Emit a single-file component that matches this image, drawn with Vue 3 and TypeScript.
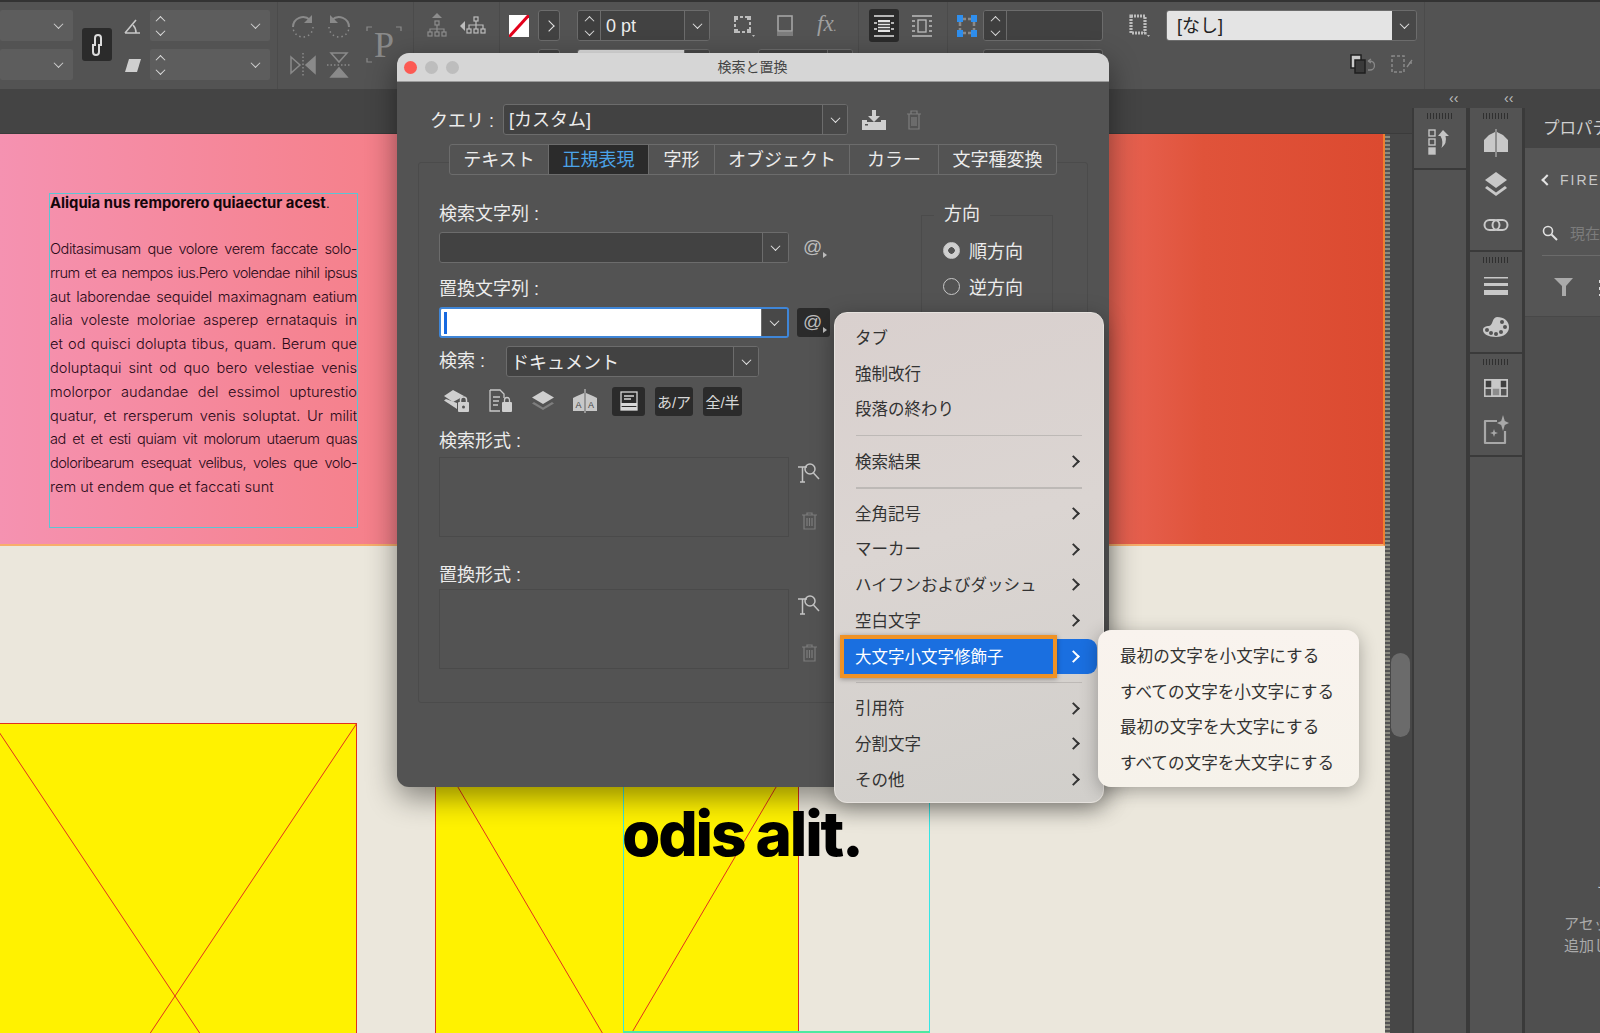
<script setup lang="ts">
const bodyLines: { t: string; s: number }[] = [
  { t: 'Oditasimusam que volore verem faccate solo-', s: -0.45 },
  { t: 'rrum et ea nempos ius.Pero volendae nihil ipsus', s: -0.6 },
  { t: 'aut laborendae sequidel maximagnam eatium', s: -0.2 },
  { t: 'alia voleste moloriae asperep ernataquis in', s: 0 },
  { t: 'et od quisci dolupta tibus, quam. Berum que', s: 0 },
  { t: 'doluptaqui sint od quo bero velestiae venis', s: 0 },
  { t: 'molorpor audandae del essimol upturestio', s: 0 },
  { t: 'quatur, et rersperum venis soluptat. Ur milit', s: 0 },
  { t: 'ad et et esti quiam vit molorum utaerum quas', s: -0.45 },
  { t: 'doloribearum esequat velibus, voles que volo-', s: -0.55 },
]
type Row = { t?: string; arrow?: boolean; sep?: boolean; on?: boolean }
const rows: Row[] = [
  { t: 'タブ' },
  { t: '強制改行' },
  { t: '段落の終わり' },
  { sep: true },
  { t: '検索結果', arrow: true },
  { sep: true },
  { t: '全角記号', arrow: true },
  { t: 'マーカー', arrow: true },
  { t: 'ハイフンおよびダッシュ', arrow: true },
  { t: '空白文字', arrow: true },
  { t: '大文字小文字修飾子', arrow: true, on: true },
  { sep: true },
  { t: '引用符', arrow: true },
  { t: '分割文字', arrow: true },
  { t: 'その他', arrow: true },
]
const sub: string[] = ['最初の文字を小文字にする', 'すべての文字を小文字にする', '最初の文字を大文字にする', 'すべての文字を大文字にする']
const tabs: string[] = ['テキスト', '正規表現', '字形', 'オブジェクト', 'カラー', '文字種変換']
const tabWidths: number[] = [98, 100, 66, 135, 89, 118]
</script>

<template>
  <div class="app">
    <header class="toolbar">
      <div class="col c1">
        <div class="lsel"><i class="chev"></i></div>
        <div class="lsel"><i class="chev"></i></div>
      </div>
      <div class="col c2">
        <div class="chain">
          <svg width="14" height="26" viewBox="0 0 14 26" fill="none" stroke="#dcdcdc" stroke-width="2"><path d="M5 14V6a3 3 0 0 1 6 0v8"/><path d="M9 12v8a3 3 0 0 1-6 0v-8"/></svg>
        </div>
      </div>
      <div class="col c3">
        <div class="ic"><svg width="18" height="18" viewBox="0 0 18 18" fill="none" stroke="#c8c8c8" stroke-width="1.6"><path d="M1 16h15M1 16 12 3"/><path d="M9 8q3 3 3 8"/></svg></div>
        <div class="ic"><svg width="18" height="18" viewBox="0 0 18 18" fill="#cfcfcf"><path d="M5 3h12l-4 13H1z"/></svg></div>
      </div>
      <div class="col c4">
        <div class="lsel"><span class="stack"><i class="chev up"></i><i class="chev"></i></span><i class="chev"></i></div>
        <div class="lsel"><span class="stack"><i class="chev up"></i><i class="chev"></i></span><i class="chev"></i></div>
      </div>
      <div class="vsep s1"></div>
      <div class="col c5 two">
        <div class="ic"><svg width="28" height="28" viewBox="0 0 28 28" fill="none" stroke="#8a8a8a" stroke-width="2"><path d="M4 15A10 10 0 0 1 21 8"/><path d="M24 15a10 10 0 0 1-20 0" stroke-dasharray="1.5 3" stroke-width="1.5"/><path d="M23 3v8h-8z" fill="#8a8a8a" stroke="none"/></svg></div>
        <div class="ic"><svg width="28" height="28" viewBox="0 0 28 28" fill="none" stroke="#8a8a8a" stroke-width="2"><path d="M24 15A10 10 0 0 0 7 8"/><path d="M4 15a10 10 0 0 0 20 0" stroke-dasharray="1.5 3" stroke-width="1.5"/><path d="M5 3v8h8z" fill="#8a8a8a" stroke="none"/></svg></div>
        <div class="ic"><svg width="28" height="26" viewBox="0 0 28 26" fill="none" stroke="#8a8a8a" stroke-width="1.5"><path d="M2 5l9 8-9 8z"/><path d="M14 1v24" stroke-dasharray="1.5 2"/><path d="M26 5l-9 8 9 8z" fill="#8a8a8a"/></svg></div>
        <div class="ic"><svg width="26" height="28" viewBox="0 0 26 28" fill="none" stroke="#8a8a8a" stroke-width="1.5"><path d="M5 2h16l-8 9z"/><path d="M1 14h24" stroke-dasharray="1.5 2"/><path d="M5 26h16l-8-9z" fill="#8a8a8a"/></svg></div>
      </div>
      <div class="col c6">
        <svg class="pmark" width="36" height="38" viewBox="0 0 36 38" fill="none" stroke="#8a8a8a" stroke-width="1.2"><path d="M1 5V1h5M30 1h5v4M1 32v4h5"/><text x="8" y="31" font-size="36" font-family="Liberation Serif" fill="#8a8a8a" stroke="none">P</text></svg>
      </div>
      <div class="vsep s2"></div>
      <div class="col c7 two">
        <div class="ic"><svg width="20" height="26" viewBox="0 0 20 26" fill="none" stroke="#8d8d8d" stroke-width="1.2"><path d="M10 0l5 5H5z" fill="#8d8d8d" stroke="none"/><rect x="8" y="8" width="4" height="4"/><path d="M10 12v4M3 19v-3h14v3M10 16v3"/><rect x="1" y="19" width="4" height="4"/><rect x="8" y="19" width="4" height="4"/><rect x="15" y="19" width="4" height="4"/></svg></div>
        <div class="ic"><svg width="26" height="20" viewBox="0 0 26 20" fill="none" stroke="#bdbdbd" stroke-width="1.2"><path d="M0 10l5-5v10z" fill="#bdbdbd" stroke="none"/><rect x="14" y="1" width="4" height="4"/><path d="M16 5v4M9 13v-4h14v4M16 9v4"/><rect x="7" y="13" width="4" height="4"/><rect x="14" y="13" width="4" height="4"/><rect x="21" y="13" width="4" height="4"/></svg></div>
      </div>
      <div class="vsep s3"></div>
      <div class="col c8">
        <div class="strokerow">
          <svg width="20" height="22" viewBox="0 0 20 22"><rect width="20" height="22" fill="#fff"/><path d="M20 0 0 22" stroke="#e3001b" stroke-width="3"/></svg>
          <span class="nextbtn"><i class="chev right"></i></span>
        </div>
        <div class="strokerow end"><span class="nextbtn"></span></div>
      </div>
      <div class="col c9">
        <div class="dsel">
          <span class="stepper"><i class="chev up"></i><i class="chev"></i></span>
          <span class="val">0 pt</span>
          <span class="drop"><i class="chev"></i></span>
        </div>
        <div class="dsel lightfill"><span class="val"></span><span class="drop"><i class="chev"></i></span></div>
      </div>
      <div class="col c10">
        <div class="row3">
          <svg width="24" height="24" viewBox="0 0 24 24" fill="none" stroke="#bdbdbd" stroke-width="2"><rect x="3" y="3" width="15" height="15" stroke-dasharray="3 2"/><rect x="2" y="2" width="4" height="4" fill="#bdbdbd" stroke="none"/><rect x="15" y="2" width="4" height="4" fill="#bdbdbd" stroke="none"/><rect x="2" y="15" width="4" height="4" fill="#bdbdbd" stroke="none"/><rect x="15" y="15" width="4" height="4" fill="#bdbdbd" stroke="none"/><path d="M20 21h3l-1.500 2z" fill="#bdbdbd" stroke="none"/></svg>
          <svg width="20" height="24" viewBox="0 0 20 24" fill="none"><rect x="3" y="2" width="14" height="15" stroke="#a5a5a5" stroke-width="1.600"/><rect x="2" y="18" width="16" height="4" fill="#7e7e7e"/></svg>
          <span class="fx">fx<small>.</small></span>
        </div>
        <div class="dsel small"><span class="val"></span><span class="drop"></span></div>
      </div>
      <div class="vsep s4"></div>
      <div class="col c11">
        <div class="row2">
          <span class="darkbtn"><svg width="20" height="22" viewBox="0 0 20 22" fill="none" stroke="#e5e5e5" stroke-width="1.400"><path d="M0 1h20M0 21h20M0 8h3M17 8h3M0 14h3M17 14h3"/><rect x="4" y="5" width="12" height="12" fill="#e5e5e5" stroke="none"/><path d="M4 8h12M4 11h12M4 14h12" stroke="#2c2c2c"/></svg></span>
          <svg width="20" height="22" viewBox="0 0 20 22" fill="none" stroke="#bdbdbd" stroke-width="1.300"><path d="M0 1h20M0 21h20M0 6h3M17 6h3M0 11h3M17 11h3M0 16h3M17 16h3"/><rect x="6" y="5" width="8" height="12"/></svg>
        </div>
      </div>
      <div class="vsep s5"></div>
      <div class="col c12">
        <div class="row4">
          <svg width="22" height="24" viewBox="0 0 22 24" fill="none"><path d="M6 5h9M6 19h9M4 8v8M18 8v8" stroke="#8a8a8a" stroke-width="2.500" stroke-dasharray="4 2"/><g fill="#2f8fee"><rect x="1" y="1" width="6" height="7"/><rect x="15" y="1" width="6" height="7"/><rect x="1" y="16" width="6" height="7"/><rect x="15" y="16" width="6" height="7"/></g></svg>
          <div class="dsel grow"><span class="stepper"><i class="chev up"></i><i class="chev"></i></span><span class="val"></span></div>
        </div>
        <div class="dsel grow peek"></div>
      </div>
      <div class="col c13">
        <svg class="dots" width="22" height="24" viewBox="0 0 22 24" fill="none" stroke="#bdbdbd" stroke-width="3.200" stroke-dasharray="2 1"><rect x="2" y="2" width="14" height="17"/><path d="M18 21h3l-1.500 2z" fill="#bdbdbd" stroke="none"/></svg>
      </div>
      <div class="col c14">
        <div class="nashi"><span class="nval">[なし]</span><span class="drop"><i class="chev"></i></span></div>
        <div class="row5">
          <svg width="26" height="24" viewBox="0 0 26 24" fill="none"><rect x="2" y="2" width="10" height="13" fill="#c9c9c9" stroke="#1f1f1f" stroke-width="1.500"/><rect x="6" y="7" width="10" height="13" fill="#3a3a3a" stroke="#1f1f1f" stroke-width="1.500"/><path d="M19 8h2a4 4 0 0 1 0 9h-2M19 8l3-2M19 8l3 2" stroke="#888" stroke-width="1.300"/></svg>
          <svg width="26" height="24" viewBox="0 0 26 24" fill="none" stroke="#8a8a8a" stroke-width="1.500"><rect x="3" y="3" width="12" height="16" stroke-dasharray="3 2"/><path d="M18 14l5-7M20 10h3" stroke-width="1.300"/></svg>
        </div>
      </div>
      <div class="vsep s6"></div>
    </header>

    <main class="main">
      <section class="work">
        <div class="strip"></div>
        <div class="below">
          <div class="canvas">
            <div class="band"></div>
            <div class="pageedge"></div>
            <div class="frame copy">
              <p class="head"><b>Aliquia nus remporero quiaectur acest</b>.</p>
              <p v-for="l in bodyLines" :key="l.t" class="line" :style="{ letterSpacing: l.s + 'px' }">{{ l.t }}</p>
              <p class="line last">rem ut endem que et faccati sunt</p>
            </div>
            <svg class="ph p1" viewBox="0 0 364 546" preserveAspectRatio="none"><rect width="364" height="546" fill="#fff200"/><path d="M0 0 364 546M364 0 0 546" stroke="#e0311f" stroke-width="1"/><rect x=".5" y=".5" width="363" height="545" fill="none" stroke="#e0311f"/></svg>
            <svg class="ph p2" viewBox="0 0 364 620" preserveAspectRatio="none"><rect width="364" height="620" fill="#fff200"/><path d="M0 0 364 620M364 0 0 620" stroke="#e0311f" stroke-width="1"/><rect x=".5" y=".5" width="363" height="619" fill="none" stroke="#e0311f"/></svg>
            <div class="frame big"><span>odis alit.</span></div>
          </div>
          <div class="gutter"><div class="thumb"></div></div>
        </div>
      </section>

      <aside class="docks">
        <div class="collapse"><span class="cc a">‹‹</span><span class="cc b">‹‹</span></div>
        <div class="dockrow">
          <div class="dock">
            <div class="grp g0">
              <div class="grip"></div>
              <svg class="di" width="24" height="30" viewBox="0 0 24 30" fill="none" stroke="#c4c4c4" stroke-width="1.400"><rect x="1" y="3" width="6" height="6"/><rect x="1" y="12" width="6" height="6"/><rect x="1" y="21" width="6" height="6" fill="#c4c4c4"/><path d="M15 3l6 6h-3.500q2 7-4 12 2-7-1-12H10z" fill="#c4c4c4" stroke="none"/></svg>
            </div>
            <div class="grp rest"></div>
          </div>
          <div class="dock">
            <div class="grp g1">
              <div class="grip"></div>
              <svg class="di" width="26" height="28" viewBox="0 0 26 28" fill="#c8c8c8"><path d="M6 6l6-3v20H1v-12zM20 6l-6-3v20h11v-12z"/><path d="M13 0v28" stroke="#c8c8c8" stroke-width="1"/></svg>
              <svg class="di" width="24" height="26" viewBox="0 0 24 26" fill="#c8c8c8"><path d="M12 1l11 8-11 8L1 9z"/><path d="M3 15l-2 2 11 8 11-8-2-2-9 6.500z"/></svg>
              <svg class="di" width="26" height="14" viewBox="0 0 26 14" fill="none" stroke="#c8c8c8" stroke-width="2"><rect x="1.500" y="2" width="15" height="10" rx="5"/><rect x="9.500" y="2" width="15" height="10" rx="5"/></svg>
            </div>
            <div class="grp g2">
              <div class="grip"></div>
              <svg class="di" width="24" height="18" viewBox="0 0 24 18" fill="#c8c8c8"><rect width="24" height="1.500"/><rect y="6" width="24" height="3"/><rect y="13" width="24" height="5"/></svg>
              <svg class="di" width="28" height="22" viewBox="0 0 28 22"><path d="M15 1c7 0 12 4 12 10 0 6-5 10-13 10S1 18 1 14c0-3 3-4 6-4 4 0 3-9 8-9z" fill="#c8c8c8"/><g fill="#535353"><circle cx="20" cy="6" r="2"/><circle cx="23" cy="11" r="2"/><circle cx="19" cy="16" r="2"/><circle cx="14" cy="18" r="2"/><circle cx="9" cy="17" r="2"/><circle cx="5" cy="14" r="2"/></g></svg>
            </div>
            <div class="grp g3">
              <div class="grip"></div>
              <svg class="di" width="24" height="18" viewBox="0 0 24 18" fill="none" stroke="#c8c8c8" stroke-width="1.500"><rect x=".8" y=".8" width="22.400" height="16.400"/><path d="M.8 9h22.400M8 .8v16.400M16 .8v16.400"/><rect x="8" y="1" width="8" height="8" fill="#c8c8c8"/><rect x="1" y="1" width="7" height="8" fill="#3f3f3f"/><rect x="16" y="1" width="7" height="8" fill="#3f3f3f"/><rect x="8" y="9" width="8" height="8" fill="#8c8c8c"/></svg>
              <svg class="di" width="26" height="30" viewBox="0 0 26 30" fill="none"><path d="M14 6H2v22h20V16" stroke="#a8a8a8" stroke-width="2.200" stroke-linejoin="round"/><path d="M20 0l1.800 6L26 8l-4.200 2L20 16l-1.800-6L14 8l4.200-2zM11 14l1 3 3 1-3 1-1 3-1-3-3-1 3-1z" fill="#a8a8a8"/></svg>
            </div>
            <div class="grp rest"></div>
          </div>
          <div class="panel">
            <div class="ptab"><span>プロパティ</span></div>
            <div class="ptop">
              <div class="crumb"><i class="chev back"></i><span>FIREFLY</span></div>
              <div class="search">
                <svg width="16" height="16" viewBox="0 0 16 16" fill="none" stroke="#e0e0e0" stroke-width="1.600"><circle cx="6" cy="6" r="4.500"/><path d="M9.500 9.500 15 15" stroke-width="2"/></svg>
                <span>現在のドキュメント</span>
              </div>
              <div class="filters">
                <svg width="19" height="18" viewBox="0 0 19 18" fill="#aaa"><path d="M0 0h19l-7 8v10H8V8z"/></svg>
                <i class="kebab"></i>
              </div>
            </div>
            <div class="pmain">
              <p class="p-a">テキスト</p>
              <p class="p-b">アセットを</p>
              <p class="p-c">追加してください</p>
            </div>
          </div>
        </div>
      </aside>
    </main>

    <div class="dialog">
      <div class="title">
        <span class="lights"><i class="red"></i><i></i><i></i></span>
        <span class="ttext">検索と置換</span>
      </div>
      <div class="dbody">
        <div class="query">
          <span class="qlabel">クエリ :</span>
          <div class="dsel q"><span class="val">[カスタム]</span><span class="drop"><i class="chev"></i></span></div>
          <svg class="qi" width="24" height="20" viewBox="0 0 24 20" fill="#cfcfcf"><path d="M10 0h4v6h4l-6 6-6-6h4z"/><rect y="10" width="5" height="2"/><rect x="19" y="10" width="5" height="2"/><path d="M0 12h24v8H0z"/><rect x="3" y="14" width="3" height="1.500" fill="#535353"/></svg>
          <svg class="qt" width="16" height="20" viewBox="0 0 16 20" fill="none" stroke="#7d7d7d" stroke-width="1.200"><path d="M1 4h14M5 4V1h6v3M3 4v15h10V4M6 7v9M8 7v9M10 7v9"/></svg>
        </div>
        <div class="tabarea">
          <div class="tabs">
            <span v-for="(t, i) in tabs" :key="t" class="tab" :class="{ active: i === 1 }" :style="{ width: tabWidths[i] + 'px' }">{{ t }}</span>
          </div>
          <div class="tabpanel">
            <div class="left">
              <div class="flabel">検索文字列 :</div>
              <div class="frow">
                <div class="dsel fld"><span class="val"></span><span class="drop"><i class="chev"></i></span></div>
                <span class="at">@<i></i></span>
              </div>
              <div class="flabel gap">置換文字列 :</div>
              <div class="frow">
                <div class="dsel fld focus"><span class="val"><i class="caret"></i></span><span class="drop"><i class="chev"></i></span></div>
                <span class="at on">@<i></i></span>
              </div>
              <div class="srow">
                <span class="slabel">検索 :</span>
                <div class="dsel doc"><span class="val">ドキュメント</span><span class="drop"><i class="chev"></i></span></div>
              </div>
              <div class="irow">
                <span class="ib w1"><svg width="26" height="24" viewBox="0 0 26 24"><path d="M9 1l11 6-11 6L0 7z" fill="#cfcfcf"/><path d="M2 10l-2 1.500L13 20v-6z" fill="#cfcfcf"/><rect x="14" y="13" width="11" height="10" rx="1" fill="#cfcfcf"/><path d="M16.500 13v-2a3 3 0 0 1 6 0v2" fill="none" stroke="#cfcfcf" stroke-width="1.500"/><circle cx="19.500" cy="18" r="1.500" fill="#535353"/></svg></span>
                <span class="ib w2"><svg width="24" height="24" viewBox="0 0 24 24" fill="none" stroke="#c8c8c8" stroke-width="1.300"><path d="M1 1h10l4 4v4M11 22H1V1M4 8h7M4 12h6M4 16h5"/><rect x="13" y="13" width="10" height="10" rx="1" fill="#cfcfcf" stroke="none"/><path d="M15.500 13v-2a2.500 2.500 0 0 1 5 0v2"/></svg></span>
                <span class="ib w3"><svg width="24" height="22" viewBox="0 0 24 22"><path d="M12 1l11 6.500L12 14 1 7.500z" fill="#cfcfcf"/><path d="M3 12l-2 1.500L12 20l11-6.500-2-1.500-9 5.500z" fill="#7e7e7e"/></svg></span>
                <span class="ib w4"><svg width="26" height="24" viewBox="0 0 26 24"><path d="M5 7l7-3v18H1V9zM21 7l-7-3v18h11V9z" fill="#c8c8c8"/><path d="M13 0v24" stroke="#d8d8d8"/><text x="3.500" y="19" font-size="9" font-family="Liberation Sans" fill="#444">A</text><text x="16" y="19" font-size="9" font-family="Liberation Sans" fill="#444">A</text></svg></span>
                <span class="ibtn b1"><svg width="18" height="20" viewBox="0 0 18 20" fill="none" stroke="#d8d8d8" stroke-width="1.300"><rect x="1" y="1" width="16" height="18"/><path d="M4 5h10M4 8h7"/><rect x="1" y="12" width="16" height="3" fill="#d8d8d8" stroke="none"/><rect x="1" y="16" width="16" height="3" fill="#d8d8d8" stroke="none"/></svg></span>
                <span class="ibtn b2">あ/ア</span>
                <span class="ibtn b3">全/半</span>
              </div>
              <div class="flabel g2">検索形式 :</div>
              <div class="frow fm">
                <div class="fbox"></div>
                <div class="fic">
                  <svg width="24" height="22" viewBox="0 0 24 22" fill="none" stroke="#c4c4c4" stroke-width="1.500"><path d="M1 5h9M5.500 5v15M3 20h5"/><circle cx="13" cy="7" r="5"/><path d="M16.500 11 22 17"/></svg>
                  <svg width="15" height="18" viewBox="0 0 15 18" fill="none" stroke="#7d7d7d" stroke-width="1.200"><path d="M0 3h15M5 3V1h5v2M2 3v14h11V3M5 6v8M7.500 6v8M10 6v8"/></svg>
                </div>
              </div>
              <div class="flabel g3">置換形式 :</div>
              <div class="frow fm2">
                <div class="fbox"></div>
                <div class="fic">
                  <svg width="24" height="22" viewBox="0 0 24 22" fill="none" stroke="#c4c4c4" stroke-width="1.500"><path d="M1 5h9M5.500 5v15M3 20h5"/><circle cx="13" cy="7" r="5"/><path d="M16.500 11 22 17"/></svg>
                  <svg width="15" height="18" viewBox="0 0 15 18" fill="none" stroke="#7d7d7d" stroke-width="1.200"><path d="M0 3h15M5 3V1h5v2M2 3v14h11V3M5 6v8M7.500 6v8M10 6v8"/></svg>
                </div>
              </div>
            </div>
            <div class="dir">
              <span class="legend">方向</span>
              <div class="radio"><i class="dot on"></i><span>順方向</span></div>
              <div class="radio"><i class="dot"></i><span>逆方向</span></div>
            </div>
          </div>
        </div>
      </div>
    </div>

    <div class="menu">
      <template v-for="(r, i) in rows" :key="i">
        <div v-if="r.sep" class="msep" :class="{ first: i === 3 }"><i></i></div>
        <div v-else class="mrow" :class="{ on: r.on }">
          <span v-if="r.on" class="orange"></span>
          <span class="mtext">{{ r.t }}</span>
          <i v-if="r.arrow" class="marrow"></i>
        </div>
      </template>
    </div>
    <div class="submenu">
      <div v-for="s in sub" :key="s" class="srowm">{{ s }}</div>
    </div>
  </div>
</template>

<style>
html, body { margin: 0; background: #535353; overflow: hidden; }
</style>

<style scoped>
* { box-sizing: border-box; }
.app { position: relative; width: 1600px; height: 1033px; overflow: hidden; background: #3a3a3a; display: flex; flex-direction: column; font-family: "Liberation Sans", "Noto Sans CJK JP", sans-serif; color: #e6e6e6; }
p { margin: 0; }
i { display: block; }

/* chevrons */
.chev { width: 7px; height: 7px; border-right: 1.500px solid #e4e4e4; border-bottom: 1.500px solid #e4e4e4; transform: rotate(45deg) translate(-1px, -1px); flex: none; }
.chev.up { transform: rotate(225deg) translate(-1px, -1px); }
.chev.right { transform: rotate(-45deg); width: 8px; height: 8px; }
.chev.back { transform: rotate(135deg); width: 8px; height: 8px; border-width: 2px; }

/* toolbar */
.toolbar { height: 89px; flex: none; background: #535353; border-top: 2px solid #333; display: flex; align-items: flex-start; }
.col { display: flex; flex-direction: column; gap: 8px; padding-top: 8px; flex: none; }
.col.two { display: grid; grid-template-columns: 36px 36px; gap: 8px 0; }
.vsep { width: 1px; height: 87px; background: #4b4b4b; flex: none; }
.ic { height: 31px; display: flex; align-items: center; justify-content: center; }
.lsel { height: 31px; background: #5d5d5d; border-radius: 2px; display: flex; align-items: center; justify-content: space-between; padding: 0 11px 0 7px; }
.lsel > .chev { margin-left: auto; opacity: .85; }
.stack { display: flex; flex-direction: column; gap: 6px; align-items: center; }
.stack .chev, .stepper .chev { opacity: .95; }
.c1 { width: 73px; }
.c2 { width: 30px; margin-left: 9px; padding-top: 26px; }
.chain { width: 30px; height: 33px; background: #2b2b2b; border-radius: 3px; display: flex; align-items: center; justify-content: center; }
.c3 { width: 18px; margin-left: 12px; }
.c4 { width: 120px; margin-left: 8px; }
.s1 { margin-left: 7px; }
.c5 { width: 72px; margin-left: 7px; }
.c6 { width: 36px; margin-left: 9px; padding-top: 24px; }
.pmark { overflow: visible; }
.s2 { margin-left: 11px; }
.c7 { width: 76px; margin-left: 5px; grid-template-columns: 30px 46px; }
.s3 { margin-left: 4px; }
.c8 { width: 51px; margin-left: 9px; }
.strokerow { display: flex; height: 31px; align-items: center; justify-content: space-between; }
.strokerow.end { justify-content: flex-end; }
.nextbtn { width: 22px; height: 31px; border: 1px solid #6c6c6c; border-radius: 3px; background: #424242; display: flex; align-items: center; justify-content: center; }
.c9 { width: 133px; margin-left: 17px; }
.dsel { height: 31px; display: flex; border: 1px solid #6c6c6c; border-radius: 3px; background: #424242; overflow: hidden; flex: none; }
.dsel .val { flex: 1; min-width: 0; font-size: 18px; line-height: 31px; padding-left: 5px; color: #ececec; white-space: nowrap; }
.dsel .drop { width: 25px; border-left: 1px solid #6c6c6c; background: #484848; display: flex; align-items: center; justify-content: center; flex: none; }
.stepper { width: 23px; background: #3f3f3f; border-right: 1px solid #6c6c6c; display: flex; flex-direction: column; gap: 6px; align-items: center; justify-content: center; flex: none; }
.lightfill .val { background: #dedede; }
.c10 { width: 126px; margin-left: 13px; }
.row3 { display: flex; height: 31px; align-items: center; }
.row3 svg:first-child { margin-left: 9px; }
.row3 svg:nth-child(2) { margin-left: 19px; }
.fx { margin-left: 22px; font: italic 23px/31px "Liberation Serif", serif; color: #a0a0a0; }
.fx small { font-size: 12px; }
.dsel.small { width: 95px; margin-left: 35px; }
.s4 { margin-left: 9px; }
.c11 { width: 78px; margin-left: 10px; padding-top: 7px; }
.row2 { display: flex; align-items: center; gap: 13px; height: 33px; }
.darkbtn { width: 30px; height: 33px; background: #2b2b2b; border-radius: 3px; display: flex; align-items: center; justify-content: center; }
.row2 svg { flex: none; }
.s5 { margin-left: 0; }
.c12 { width: 147px; margin-left: 8px; }
.row4 { display: flex; height: 31px; align-items: center; justify-content: space-between; }
.dsel.grow { width: 120px; }
.dsel.peek { margin-left: 27px; }
.c13 { width: 22px; margin-left: 26px; padding-top: 12px; }
.c14 { width: 251px; margin-left: 15px; }
.nashi { height: 31px; display: flex; border: 1px solid #6c6c6c; border-radius: 3px; overflow: hidden; }
.nval { flex: 1; background: #e4e4e4; color: #222; font-size: 18px; line-height: 31px; padding-left: 10px; }
.nashi .drop { width: 24px; background: #484848; display: flex; align-items: center; justify-content: center; }
.row5 { display: flex; height: 31px; align-items: center; gap: 14px; margin-left: 183px; }
.s6 { margin-left: 7px; }

/* main */
.main { flex: 1; display: flex; min-height: 0; }
.work { width: 1412px; display: flex; flex-direction: column; flex: none; }
.strip { height: 45px; background: #444; border-bottom: 1px solid #3b3b3b; flex: none; }
.below { flex: 1; display: flex; min-height: 0; }
.canvas { position: relative; width: 1390px; overflow: hidden; background: #ebe7dc; flex: none; }
.band { height: 412px; width: 1385px; background: linear-gradient(90deg, #f592b1 0, #f57f88 29%, #e86455 80%, #e0533a 87%, #dc4a30 100%); border-bottom: 2px solid #f7ae6b; border-right: 2px solid #ee7f2e; }
.pageedge { position: absolute; top: 0; right: 0; width: 5px; height: 100%; background: repeating-linear-gradient(180deg, #535353 0 2px, #8b8b80 2px 4px); }
.frame { position: absolute; border: 1px solid #5cc5d4; }
.copy { left: 49px; top: 59px; width: 309px; height: 335px; color: #2a0a18; font-family: Inter, sans-serif; font-size: 14.600px; font-weight: 300; }
.head { font-size: 14.800px; line-height: 18px; color: #14060b; margin-bottom: 26px; white-space: nowrap; }
.head b { font-weight: 700; }
.line { line-height: 23.800px; text-align: justify; text-align-last: justify; width: 307px; }
.line.last { text-align-last: left; }
.ph { position: absolute; }
.p1 { left: -7px; top: 589px; width: 364px; height: 546px; }
.p2 { left: 435px; top: 614px; width: 364px; height: 620px; }
.big { left: 623px; top: 620px; width: 307px; height: 279px; border-color: #35e6e6; border-bottom: 2px solid #4fe8a0; }
.big span { position: absolute; left: -2px; top: 44px; font: 800 62px/70px Inter, sans-serif; letter-spacing: -2.200px; color: #000; white-space: nowrap; }
.gutter { width: 22px; background: #474747; padding: 519px 0 0 1px; flex: none; }
.thumb { width: 19px; height: 84px; border-radius: 10px; background: #6b6b6b; }

.docks { flex: 1; display: flex; flex-direction: column; min-width: 0; }
.collapse { height: 19px; background: #444; flex: none; position: relative; font-size: 14px; line-height: 19px; color: #bdbdbd; }
.cc { position: absolute; }
.cc.a { left: 37px; }
.cc.b { left: 92px; }
.dockrow { flex: 1; display: flex; min-height: 0; padding-left: 2px; gap: 4px; }
.dock { width: 52px; display: flex; flex-direction: column; gap: 2px; flex: none; }
.grp { background: #535353; display: flex; flex-direction: column; align-items: center; padding-top: 5px; flex: none; }
.grp.rest { flex: 1; }
.grip { width: 27px; height: 6px; background: repeating-linear-gradient(90deg, #2f2f2f 0 1px, transparent 1px 3px); margin-bottom: 9px; flex: none; }
.di { flex: none; }
.g0 { height: 60px; }
.g0 .grip { margin-bottom: 8px; }
.g1 { height: 142px; }
.g1 .grip { margin-bottom: 10px; }
.g1 .di:nth-of-type(2) { margin-top: 14px; }
.g1 .di:nth-of-type(3) { margin-top: 21px; }
.g2 { height: 100px; }
.g2 .di:nth-of-type(1) { margin-top: 5px; }
.g2 .di:nth-of-type(2) { margin-top: 21px; }
.g3 { height: 101px; }
.g3 .di:nth-of-type(1) { margin-top: 5px; }
.g3 .di:nth-of-type(2) { margin-top: 18px; }
.panel { flex: 1; min-width: 0; margin-left: -1px; display: flex; flex-direction: column; overflow: hidden; background: #4f4f4f; }
.ptab { height: 40px; background: #444; flex: none; font-size: 16.500px; line-height: 40px; color: #d0d0d0; padding-left: 18px; white-space: nowrap; }
.ptop { height: 169px; background: #555; flex: none; border-bottom: 1px solid #484848; }
.crumb { display: flex; align-items: center; gap: 9px; padding: 21px 0 0 18px; height: 43px; font-size: 14px; letter-spacing: 2px; color: #c8c8c8; white-space: nowrap; }
.search { display: flex; align-items: center; gap: 12px; margin: 28px 0 0 17px; height: 37px; font-size: 15px; color: #7c7c7c; white-space: nowrap; border-bottom: 1px solid #6b6b6b; padding-bottom: 9px; }
.search svg, .filters svg { flex: none; }
.filters { display: flex; align-items: center; padding: 22px 0 0 29px; gap: 26px; }
.kebab { width: 4px; height: 18px; background: radial-gradient(circle, #ddd 1.800px, transparent 2px) 0 0 / 4px 7px; flex: none; }
.pmain { flex: 1; position: relative; font-size: 15px; color: #aaa; white-space: nowrap; padding-left: 72px; }
.p-a { margin-top: 560px; color: #c8c8c8; }
.p-b { margin-top: 15px; margin-left: -33px; line-height: 22px; }
.p-c { margin-left: -33px; line-height: 22px; }

/* dialog */
.dialog { position: absolute; left: 397px; top: 53px; width: 712px; height: 734px; background: #535353; border-radius: 12px; overflow: hidden; box-shadow: 0 10px 30px rgba(0,0,0,.45); z-index: 5; }
.title { height: 29px; background: #d6d6d6; border-bottom: 1px solid #9a9a9a; position: relative; display: flex; align-items: center; justify-content: center; }
.lights { position: absolute; left: 7px; top: 8px; display: flex; gap: 8px; }
.lights i { width: 13px; height: 13px; border-radius: 50%; background: #bdbdbd; }
.lights i.red { background: #fc5a53; }
.ttext { font-size: 14px; line-height: 30px; color: #444; margin-left: -1px; }
.dbody { padding-top: 22px; }
.query { display: flex; align-items: center; height: 31px; margin-left: 33px; }
.qlabel { width: 73px; flex: none; font-size: 18px; line-height: 31px; padding-top: 3px; color: #ececec; white-space: nowrap; }
.dsel.q { width: 345px; }
.dsel.q .val { padding-left: 5px; line-height: 31px; }
.qi { margin-left: 14px; }
.qt { margin-left: 20px; }
.tabarea { margin: 9px 0 0 21px; }
.tabs { display: flex; height: 31px; margin: 0 0 -13px 31px; position: relative; z-index: 1; width: max-content; border: 1px solid #6c6c6c; border-radius: 3px; background: #535353; overflow: hidden; }
.tab { border-left: 1px solid #6c6c6c; font-size: 18px; line-height: 31px; text-align: center; color: #ececec; white-space: nowrap; flex: none; }
.tab:first-child { border-left: 0; }
.tab.active { background: #2b2b2b; color: #4ba3e8; }
.tabpanel { width: 670px; height: 541px; border: 1px solid #4b4b4b; border-radius: 3px; display: flex; }
.left { width: 502px; padding: 39px 0 0 20px; flex: none; }
.flabel { height: 22px; font-size: 18px; line-height: 25px; color: #ececec; white-space: nowrap; }
.flabel.gap { margin-top: 14px; }
.flabel.g2 { margin-top: 13px; }
.flabel.g3 { margin-top: 26px; }
.frow { display: flex; align-items: center; margin-top: 8px; }
.fld { width: 350px; }
.fld .drop { width: 26px; }
.fld.focus { border: 2px solid #3f86d8; }
.fld.focus .val { background: #fff; padding: 3px 0 0 3px; }
.caret { width: 3px; height: 22px; background: #1769e0; }
.at { position: relative; width: 33px; height: 29px; margin-left: 8px; border-radius: 3px; font-size: 19px; line-height: 27px; text-align: left; padding-left: 6px; color: #bcbcbc; flex: none; }
.at i { position: absolute; right: 3px; bottom: 4px; width: 0; height: 0; border-left: 4px solid #bcbcbc; border-top: 3px solid transparent; border-bottom: 3px solid transparent; }
.at.on { background: #2b2b2b; }
.srow { display: flex; align-items: center; margin-top: 8px; }
.slabel { width: 67px; font-size: 18px; line-height: 29px; color: #ececec; white-space: nowrap; }
.dsel.doc { width: 253px; }
.dsel.doc .val { padding-left: 4px; line-height: 32px; }
.irow { display: flex; align-items: center; height: 30px; margin-top: 9px; }
.ib { display: flex; width: 26px; justify-content: center; flex: none; }
.w1 { margin-left: 5px; }
.w2 { margin-left: 18px; }
.w3 { margin-left: 16px; }
.w4 { margin-left: 16px; }
.ibtn { height: 29px; background: #2b2b2b; border-radius: 3px; display: flex; align-items: center; justify-content: center; font-size: 16px; color: #d8d8d8; white-space: nowrap; flex: none; }
.b1 { width: 33px; margin-left: 14px; }
.b2 { width: 38px; margin-left: 10px; font-size: 15px; }
.b3 { width: 39px; margin-left: 10px; font-size: 15px; }
.fm { margin-top: 6px; align-items: flex-start; }
.fm2 { margin-top: 4px; align-items: flex-start; }
.fbox { width: 350px; height: 80px; border: 1px solid #4a4a4a; background: #535353; flex: none; }
.fic { width: 40px; display: flex; flex-direction: column; align-items: center; padding: 5px 0 0 0; gap: 28px; }
.dir { position: relative; width: 132px; height: 200px; margin-top: 52px; border: 1px solid #4b4b4b; padding: 16px 0 0 21px; flex: none; }
.legend { position: absolute; left: 12px; top: -13px; padding: 0 10px; background: #535353; font-size: 18px; line-height: 22px; color: #ececec; }
.radio { display: flex; align-items: center; height: 36px; gap: 9px; font-size: 18px; color: #ececec; }
.dot { width: 17px; height: 17px; border-radius: 50%; border: 1.500px solid #c8c8c8; flex: none; }
.dot.on { background: radial-gradient(circle, #535353 3px, #cfcfcf 3.500px); }

/* menu */
.menu { position: absolute; left: 834px; top: 312px; width: 270px; height: 491px; padding-top: 7px; border-radius: 13px; background: linear-gradient(165deg, #d9d0ce 0%, #dbd5d2 45%, #d1cfcb 100%); border: 1px solid #e6e2de; box-shadow: 0 6px 22px rgba(0,0,0,.35); z-index: 6; color: #333; }
.mrow { position: relative; height: 35.700px; display: flex; align-items: center; padding-left: 20px; }
.mtext { font-size: 16.500px; line-height: 24px; white-space: nowrap; position: relative; z-index: 1; }
.marrow { position: absolute; left: 234px; top: 13px; width: 9px; height: 9px; border-right: 2px solid #333; border-top: 2px solid #333; transform: rotate(45deg); }
.msep { height: 16.200px; display: flex; align-items: center; padding: 0 21px; }
.msep.first { height: 17px; }
.msep i { height: 1.500px; width: 100%; background: #bdb9b6; }
.mrow.on { margin: 0 6px 0 8px; padding-left: 12px; background: #1a6fe0; border-radius: 0 9px 9px 0; color: #fff; }
.mrow.on .marrow { left: 226px; border-color: #fff; }
.orange { position: absolute; left: -3px; top: -4px; width: 217px; height: 43px; border: 4px solid #ef9225; box-shadow: 0 1px 5px rgba(0,0,0,.35); }
.submenu { position: absolute; left: 1098px; top: 630px; width: 261px; height: 157px; padding: 9px 0 0 22px; border-radius: 13px; background: linear-gradient(180deg, #f9f3ee, #f6f2ea); box-shadow: 0 4px 18px rgba(0,0,0,.3); z-index: 7; color: #333; }
.srowm { height: 35.700px; font-size: 16.600px; line-height: 35.700px; white-space: nowrap; }
</style>
